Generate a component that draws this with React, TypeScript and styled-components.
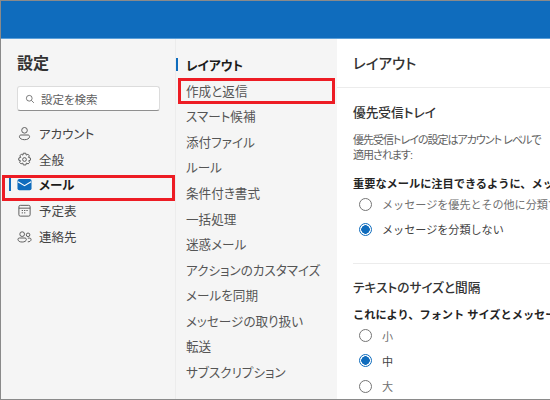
import { createGlobalStyle, styled } from "styled-components"

const GlobalStyle = createGlobalStyle`
  html, body {
    margin: 0;
    padding: 0;
    width: 550px;
    height: 400px;
    overflow: hidden;
    font-family: "Liberation Sans", "Noto Sans CJK JP", sans-serif;
    font-feature-settings: "palt";
  }
`

const navItems = [
  { label: "アカウント", icon: "account" },
  { label: "全般", icon: "gear" },
  { label: "メール", icon: "mail", active: true },
  { label: "予定表", icon: "calendar" },
  { label: "連絡先", icon: "people" },
]

const subItems = [
  "レイアウト",
  "作成と返信",
  "スマート候補",
  "添付ファイル",
  "ルール",
  "条件付き書式",
  "一括処理",
  "迷惑メール",
  "アクションのカスタマイズ",
  "メールを同期",
  "メッセージの取り扱い",
  "転送",
  "サブスクリプション",
]

const NavIcon = ({ name }: { name: string }) => {
  if (name === "account") {
    return (
      <Icon viewBox="0 0 16 16">
        <circle cx="8" cy="4.6" r="3" />
        <path d="M2.6 11.2c0-.9.7-1.6 1.6-1.6h7.6c.9 0 1.6.7 1.6 1.6 0 2.2-2.4 3.4-5.4 3.4s-5.4-1.2-5.4-3.4z" />
      </Icon>
    )
  }
  if (name === "gear") {
    return (
      <Icon viewBox="0 0 16 16">
        <path d="M6.6 1.3h2.8l.4 2 1.8-.8 1.6 1.4-1 1.8 2 .6.2 2.4-1.9.6.9 1.8-1.5 1.6-1.9-.9-.5 2H6.7l-.5-2-1.9.9-1.5-1.6.9-1.8-1.9-.6.2-2.4 2-.6-1-1.8 1.6-1.4 1.8.8z" />
        <circle cx="8" cy="8" r="2" />
      </Icon>
    )
  }
  if (name === "mail") {
    return (
      <Icon viewBox="0 0 16 16">
        <rect x="0.5" y="2" width="15" height="12" rx="2" fill="#0f6cbd" stroke="none" />
        <path d="M1 5l7 4.2L15 5" stroke="#fff" strokeWidth="1.2" />
      </Icon>
    )
  }
  if (name === "calendar") {
    return (
      <Icon viewBox="0 0 16 16">
        <rect x="2" y="2.5" width="12" height="11.5" rx="1.5" />
        <path d="M2 5.5h12" />
        <path d="M5 8h1.4M7.5 8h1.4M10 8h1.4M5 10.5h1.4M7.5 10.5h1.4" />
      </Icon>
    )
  }
  return (
    <Icon viewBox="0 0 16 16">
      <circle cx="5.5" cy="5.5" r="2.5" />
      <circle cx="11.8" cy="6.2" r="1.9" />
      <path d="M1 11c0-.8.6-1.4 1.4-1.4h6.2c.8 0 1.4.6 1.4 1.4 0 1.9-2 2.9-4.5 2.9S1 12.9 1 11z" />
      <path d="M11.5 13.7c2 0 3.5-.9 3.5-2.6 0-.8-.6-1.4-1.4-1.4h-2.1" />
    </Icon>
  )
}

const App = () => {
  return (
    <Page>
      <GlobalStyle />
      <Header />
      <Body>
        <Sidebar>
          <SidebarTitle>設定</SidebarTitle>
          <SearchBox>
            <SearchIcon viewBox="0 0 16 16">
              <circle cx="6.8" cy="6.8" r="4.6" />
              <path d="M10.2 10.2l4 4" />
            </SearchIcon>
            設定を検索
          </SearchBox>
          <NavList>
            {navItems.map((item) => (
              <NavRow key={item.label} $active={item.active}>
                {item.active && <NavMark />}
                <NavIcon name={item.icon} />
                {item.label}
              </NavRow>
            ))}
          </NavList>
          <Highlight $left={1} $top={136} $width={173} $height={26} />
        </Sidebar>
        <SubNav>
          {subItems.map((label, i) => (
            <SubRow key={label} $active={i === 0}>
              {i === 0 && <SubMark />}
              {label}
            </SubRow>
          ))}
          <Highlight $left={2} $top={39} $width={157} $height={26} />
        </SubNav>
        <Content>
          <ContentTitle>レイアウト</ContentTitle>
          <Section>
            <SectionTitle>優先受信トレイ</SectionTitle>
            <Description>
              優先受信トレイの設定はアカウント レベルで
              <br />
              適用されます:
            </Description>
            <Question>重要なメールに注目できるように、メッセージを分類しますか?</Question>
            <RadioRow>
              <Radio />
              <RadioLabel>メッセージを優先とその他に分類する</RadioLabel>
            </RadioRow>
            <RadioRow>
              <Radio $checked />
              <RadioLabel $checked>メッセージを分類しない</RadioLabel>
            </RadioRow>
          </Section>
          <SectionLast>
            <SectionTitle>テキストのサイズと間隔</SectionTitle>
            <QuestionTight>これにより、フォント サイズとメッセージの間隔が変わります</QuestionTight>
            <RadioRow>
              <Radio />
              <RadioLabel>小</RadioLabel>
            </RadioRow>
            <RadioRow>
              <Radio $checked />
              <RadioLabel $checked>中</RadioLabel>
            </RadioRow>
            <RadioRow>
              <Radio />
              <RadioLabel>大</RadioLabel>
            </RadioRow>
          </SectionLast>
        </Content>
      </Body>
    </Page>
  )
}

export default App

const Page = styled.div`
  width: 550px;
  height: 400px;
  box-sizing: border-box;
  border-top: 1px solid #8a8a8a;
  border-left: 1px solid #8a8a8a;
  border-bottom: 1px solid #8a8a8a;
  display: flex;
  flex-direction: column;
  overflow: hidden;
  background: #fff;
`

const Header = styled.div`
  height: 37px;
  flex: none;
  background: #0f6cbd;
  border-bottom: 1px solid #5b9fd8;
`

const Body = styled.div`
  flex: 1;
  display: flex;
  min-height: 0;
`

const Sidebar = styled.div`
  position: relative;
  width: 175px;
  flex: none;
  box-sizing: border-box;
  padding: 14px 16px 0 16px;
  background: #f5f5f5;
  border-right: 1px solid #ececec;
`

const SidebarTitle = styled.div`
  font-size: 16px;
  line-height: 22px;
  font-weight: 700;
  color: #333;
`

const SearchBox = styled.div`
  margin-top: 11px;
  height: 25px;
  width: 143px;
  box-sizing: border-box;
  display: flex;
  align-items: center;
  gap: 6px;
  padding-left: 7px;
  background: #fff;
  border: 1px solid #dcdcdc;
  border-bottom: 1px solid #8f8f8f;
  border-radius: 3px;
  font-size: 11.5px;
  color: #616161;
`

const SearchIcon = styled.svg`
  width: 10px;
  height: 10px;
  fill: none;
  stroke: #616161;
  stroke-width: 1.3;
`

const NavList = styled.div`
  margin-top: 9.5px;
  display: flex;
  flex-direction: column;
`

const NavRow = styled.div<{ $active?: boolean }>`
  position: relative;
  height: 25.7px;
  display: flex;
  align-items: center;
  gap: 7px;
  font-size: 12.5px;
  font-weight: ${(p) => (p.$active ? 700 : 400)};
  color: ${(p) => (p.$active ? "#1b1b1b" : "#444")};
`

const Icon = styled.svg`
  width: 15px;
  height: 15px;
  flex: none;
  fill: none;
  stroke: #555;
  stroke-width: 1;
`

const NavMark = styled.span`
  position: absolute;
  left: -8px;
  top: 6px;
  width: 2px;
  height: 13px;
  background: #0f6cbd;
`

const Highlight = styled.div<{ $left: number; $top: number; $width: number; $height: number }>`
  position: absolute;
  left: ${(p) => p.$left}px;
  top: ${(p) => p.$top}px;
  width: ${(p) => p.$width}px;
  height: ${(p) => p.$height}px;
  box-sizing: border-box;
  border: 3px solid #ed1c24;
  pointer-events: none;
`

const SubNav = styled.div`
  position: relative;
  width: 161px;
  flex: none;
  box-sizing: border-box;
  padding: 13px 0 0 10px;
  background: #f5f5f5;
`

const SubRow = styled.div<{ $active?: boolean }>`
  position: relative;
  height: 25.55px;
  display: flex;
  align-items: center;
  white-space: nowrap;
  font-size: 12.6px;
  font-weight: ${(p) => (p.$active ? 700 : 400)};
  color: ${(p) => (p.$active ? "#1b1b1b" : "#555")};
`

const SubMark = styled.span`
  position: absolute;
  left: -10px;
  top: 6px;
  width: 2px;
  height: 13px;
  background: #0f6cbd;
`

const Content = styled.div`
  flex: 1;
  min-width: 0;
  overflow: hidden;
  background: #fff;
`

const ContentTitle = styled.div`
  height: 49px;
  box-sizing: border-box;
  padding: 14px 0 0 16px;
  font-size: 14.5px;
  line-height: 22px;
  font-weight: 500;
  color: #333;
  border-bottom: 1px solid #ececec;
`

const Section = styled.div`
  margin-left: 16px;
  padding: 15px 0 0;
  height: 176px;
  box-sizing: border-box;
  border-bottom: 1px solid #ececec;
`

const SectionLast = styled.div`
  margin-left: 16px;
  padding: 14px 0 0;
`

const SectionTitle = styled.div`
  font-size: 12.7px;
  line-height: 20px;
  font-weight: 500;
  color: #333;
  white-space: nowrap;
`

const Description = styled.div`
  margin-top: 9.5px;
  font-size: 11px;
  letter-spacing: -1px;
  line-height: 15px;
  color: #616161;
  white-space: nowrap;
`

const Question = styled.div`
  margin-top: 13px;
  font-size: 11.2px;
  font-feature-settings: normal;
  line-height: 16px;
  font-weight: 700;
  color: #242424;
  white-space: nowrap;
`

const QuestionTight = styled(Question)`
  margin-top: 9px;
`

const RadioRow = styled.div`
  height: 25.3px;
  display: flex;
  align-items: center;
  gap: 10px;
  padding-left: 6px;
  white-space: nowrap;
`

const Radio = styled.span<{ $checked?: boolean }>`
  width: 13px;
  height: 13px;
  flex: none;
  box-sizing: border-box;
  border-radius: 50%;
  border: 1px solid ${(p) => (p.$checked ? "#0f6cbd" : "#757575")};
  background: ${(p) => (p.$checked ? "radial-gradient(circle, #0f6cbd 0 4px, #fff 4.5px)" : "#fff")};
`

const RadioLabel = styled.span<{ $checked?: boolean }>`
  font-size: 11.1px;
  font-feature-settings: normal;
  color: ${(p) => (p.$checked ? "#424242" : "#707070")};
`
